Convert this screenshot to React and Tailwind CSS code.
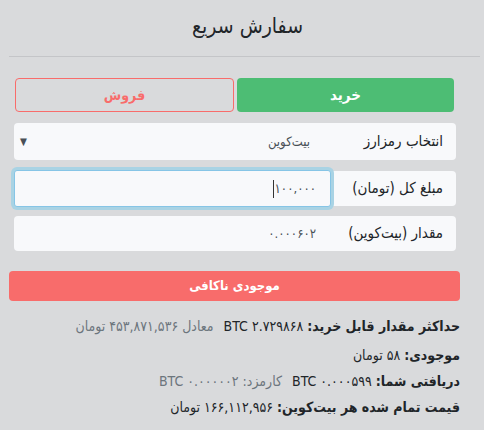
const font = { fontFamily: '"DejaVu Sans Condensed", "DejaVu Sans", sans-serif' };

const App = () => {
    return (
        <div dir="rtl" style={font} className="w-[484px] h-[430px] bg-[#d9dadc] text-[#212529] overflow-hidden">
            {/* Header */}
            <div className="ml-[9px] mr-[4px] h-[57px] border-b border-[#c4c5c8] flex items-center justify-center">
                <h1 className="text-[21px] leading-none pb-1 pl-[6px]">سفارش سریع</h1>
            </div>

            {/* Buy / Sell */}
            <div className="mt-[21px] ml-[15px] mr-[30px] flex gap-[3px] h-[34px]">
                <button className="flex-1 rounded-[4px] bg-[#4dbd74] text-white font-bold text-[15px]">خرید</button>
                <button className="flex-1 rounded-[4px] border border-[#f86c6b] text-[#f86c6b] font-bold text-[14px]">فروش</button>
            </div>

            {/* Fields */}
            <div className="mt-[11px] ml-[14px] mr-[28px] flex flex-col">
                <div className="h-[37px] rounded-[4px] bg-[#f8f9fb] flex items-center pr-[13px] pl-[6px] text-[15px]">
                    <span className="w-[133px]">انتخاب رمزارز</span>
                    <span className="text-[13px] text-[#495057]">بیت‌کوین</span>
                    <span className="mr-auto text-[10px] text-[#495057]">▼</span>
                </div>
                <div className="mt-[11px] h-[35px] rounded-[4px] bg-[#f8f9fb] flex items-stretch">
                    <span className="w-[125px] pr-[13px] flex items-center text-[15px]">مبلغ کل (تومان)</span>
                    <div className="flex-1 -my-px bg-[#f8f9fb] border border-[#86c5e6] rounded-[3px] ring-[3px] ring-[#a9d3e4] flex items-center pr-[14px] text-[13px] text-[#495057]">
                        <span>۱۰۰,۰۰۰</span>
                        <span className="w-px h-[18px] bg-[#333] mr-[1px]"></span>
                    </div>
                </div>
                <div className="mt-[10px] h-[35px] rounded-[4px] bg-[#f8f9fb] flex items-center text-[15px]">
                    <span className="w-[125px] pr-[13px]">مقدار (بیت‌کوین)</span>
                    <span className="pr-[15px] text-[13px] text-[#495057]">۰.۰۰۰۶۰۲</span>
                </div>
            </div>

            {/* Insufficient balance */}
            <div className="mt-[20px] ml-[9px] mr-[24px] h-[30px] rounded-[4px] bg-[#f86c6b] flex items-center justify-center text-white font-bold text-[13px]">
                موجودی ناکافی
            </div>

            {/* Info */}
            <div className="mt-[12px] mr-[24px] flex flex-col text-[14px] leading-[26px]">
                <p>
                    <b>حداکثر مقدار قابل خرید:</b> <span dir="ltr">BTC ۲.۷۲۹۸۶۸</span>
                    <span className="text-[#6c757d] mr-[10px]">معادل ۴۵۳,۸۷۱,۵۳۶ تومان</span>
                </p>
                <p className="mt-[3px]"><b>موجودی:</b> ۵۸ تومان</p>
                <p>
                    <b>دریافتی شما:</b> <span dir="ltr">BTC ۰.۰۰۰۵۹۹</span>
                    <span className="text-[#6c757d] mr-[10px]">کارمزد: <span dir="ltr">BTC ۰.۰۰۰۰۰۲</span></span>
                </p>
                <p><b>قیمت تمام شده هر بیت‌کوین:</b> ۱۶۶,۱۱۲,۹۵۶ تومان</p>
            </div>
        </div>
    );
};

export default App;
